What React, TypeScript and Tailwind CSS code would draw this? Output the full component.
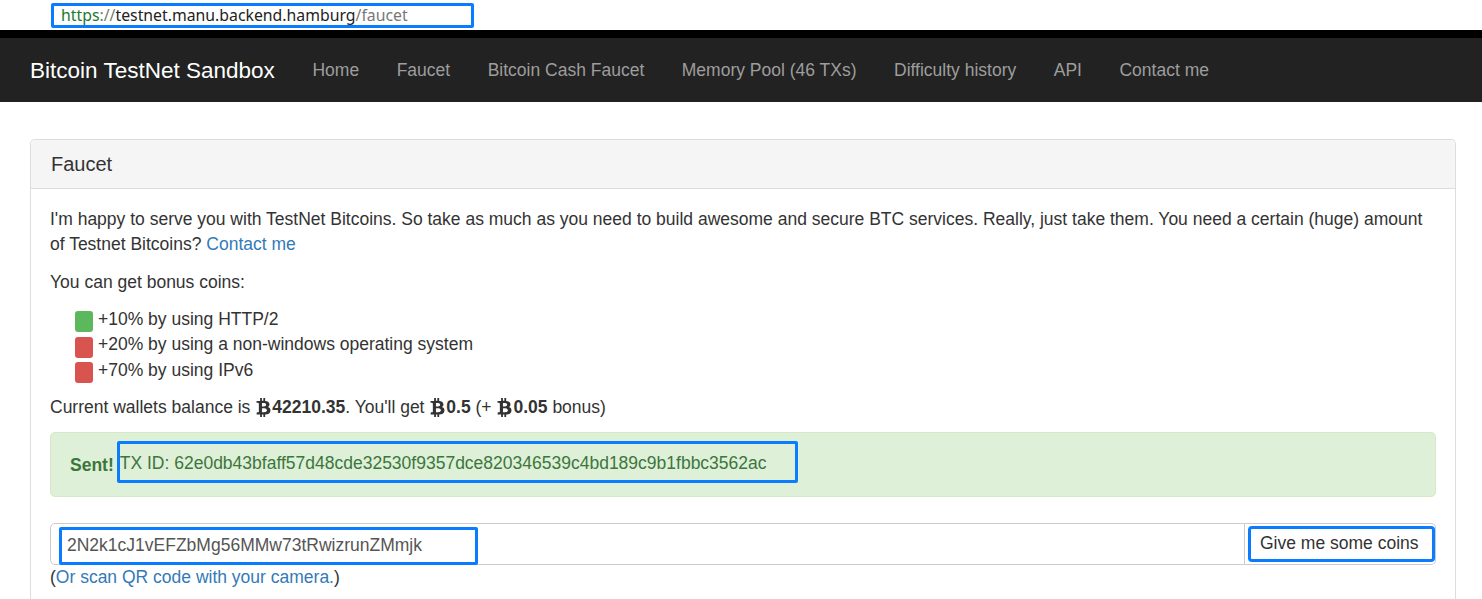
import { FaBtc } from "react-icons/fa"

const navLinks = ["Home", "Faucet", "Bitcoin Cash Faucet", "Memory Pool (46 TXs)", "Difficulty history", "API", "Contact me"]

const bonuses = [
  { ok: true, text: "+10% by using HTTP/2" },
  { ok: false, text: "+20% by using a non-windows operating system" },
  { ok: false, text: "+70% by using IPv6" },
]

function Btc({ amount }: { amount: string }) {
  return (
    <b className="inline-flex items-center">
      <FaBtc className="w-[17px] h-[19px]" />
      {amount}
    </b>
  )
}

export default function App() {
  return (
    <div className="min-h-[599px] bg-white text-[#333] font-['Liberation_Sans',Arial,sans-serif] text-[17.5px] leading-[25px]">
      {/* address bar */}
      <div className="h-[30px] pt-[3px]">
        <div className="ml-[51px] w-[423px] h-[25px] border-[3px] border-[#0a7cff] rounded-[2px] flex items-center pl-[7px] font-['Noto_Sans',sans-serif] text-[15.8px] leading-none">
          <span className="text-[#1b7a2e]">https</span>
          <span className="text-[#6f7f6f]">://</span>
          <span className="text-[#222]">testnet.manu.backend.hamburg</span>
          <span className="text-[#777]">/faucet</span>
        </div>
      </div>
      <div className="h-[8px] bg-black" />

      {/* navbar */}
      <nav className="h-[64px] bg-[#222] flex items-center pl-[30px]">
        <span className="text-white text-[22.5px] mr-[19px]">Bitcoin TestNet Sandbox</span>
        {navLinks.map(l => (
          <a key={l} className="text-[#9d9d9d] px-[18.75px]">{l}</a>
        ))}
      </nav>

      <div className="pt-[37px]">
        <div className="ml-[30px] w-[1426px] border border-[#ddd] border-b-0 rounded-t-[5px]">
          <div className="h-[49px] bg-[#f5f5f5] border-b border-[#ddd] rounded-t-[5px] px-[20px] flex items-center text-[20px]">
            Faucet
          </div>
          <div className="px-[19px] pt-[18px] pb-[20px]">
            <p className="mb-[12.5px]">
              I'm happy to serve you with TestNet Bitcoins. So take as much as you need to build awesome and secure BTC services. Really, just take them. You need a certain (huge) amount of Testnet Bitcoins? <a className="text-[#337ab7]">Contact me</a>
            </p>
            <p className="mb-[12px]">You can get bonus coins:</p>
            <ul className="pl-[25px] mb-[12px]">
              {bonuses.map(b => (
                <li key={b.text} className="flex items-start">
                  <span className={`mt-[4.5px] w-[18px] h-[21px] rounded-[3px] ${b.ok ? "bg-[#5cb85c]" : "bg-[#d9534f]"}`} />
                  <span className="ml-[5px]">{b.text}</span>
                </li>
              ))}
            </ul>
            <p className="mb-[11.5px] flex items-center whitespace-pre">
              Current wallets balance is <Btc amount="42210.35" />. You'll get <Btc amount="0.5" /> (+ <Btc amount="0.05" /> bonus)
            </p>

            <div className="h-[65px] bg-[#dff0d8] border border-[#d6e9c6] rounded-[5px] text-[#3c763d] flex items-center pl-[19px] pt-[2px] mb-[26px]">
              <b>Sent!</b>
              <span className="ml-[3px] mt-[-6px] h-[42px] border-[3px] border-[#0a7cff] rounded-[2px] flex items-center pt-[3px] pr-[28px]">
                TX ID: 62e0db43bfaff57d48cde32530f9357dce820346539c4bd189c9b1fbbc3562ac
              </span>
            </div>

            <div className="flex h-[42px]">
              <div className="flex-1 border border-[#ccc] rounded-l-[5px] pl-[8px] pt-[3px] text-[#555]">
                <div className="w-[419px] h-[38px] border-[3px] border-[#0a7cff] rounded-[2px] flex items-center pl-[5px]">
                  2N2k1cJ1vEFZbMg56MMw73tRwizrunZMmjk
                </div>
              </div>
              <div className="w-[191px] border border-l-0 border-[#ccc] rounded-r-[5px] pl-[3px] pt-[2px]">
                <div className="w-[187px] h-[36px] border-[3px] border-[#0a7cff] rounded-[4px] flex items-center pl-[9px] text-[#333]">
                  Give me some coins
                </div>
              </div>
            </div>
            <p>
              (<a className="text-[#337ab7]">Or scan QR code with your camera.</a>)
            </p>
          </div>
        </div>
      </div>
    </div>
  )
}
